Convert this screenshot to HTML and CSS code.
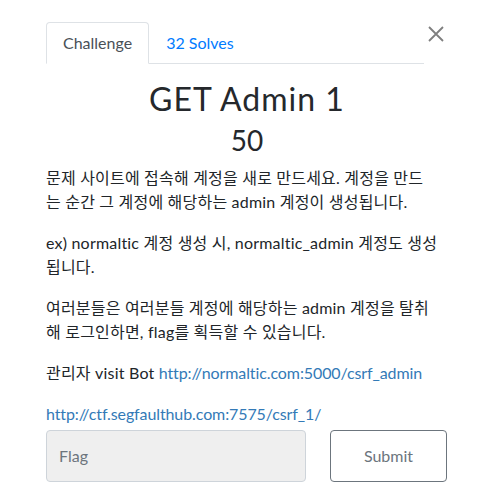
FILE: index.html
```html
<!DOCTYPE html>
<html lang="ko">
<head>
<meta charset="utf-8">
<title>GET Admin 1</title>
<link rel="stylesheet" href="styles.css">
</head>
<body>
<div class="modal">
  <div class="head">
    <ul class="tabs">
      <li class="tab active">Challenge</li>
      <li class="tab"><a href="#">32 Solves</a></li>
    </ul>
    <button class="close" aria-label="Close">
      <svg width="16" height="16" viewBox="0 0 16 16"><path d="M1 1 L15 15 M15 1 L1 15" stroke="#7f7f7f" stroke-width="1.8" fill="none"/></svg>
    </button>
  </div>
  <h2 class="name">GET Admin 1</h2>
  <h3 class="value">50</h3>
  <div class="desc">
    <p>문제 사이트에 접속해 계정을 새로 만드세요. 계정을 만드<br>는 순간 그 계정에 해당하는 admin 계정이 생성됩니다.</p>
    <p>ex) normaltic 계정 생성 시, normaltic_admin 계정도 생성<br>됩니다.</p>
    <p>여러분들은 여러분들 계정에 해당하는 admin 계정을 탈취<br>해 로그인하면, flag를 획득할 수 있습니다.</p>
    <p>관리자 visit Bot <a href="#">http://normaltic.com:5000/csrf_admin</a></p>
  </div>
  <div class="conn"><a href="#">http://ctf.segfaulthub.com:7575/csrf_1/</a></div>
  <form class="submit-row">
    <input class="flag" type="text" placeholder="Flag">
    <button class="btn" type="button">Submit</button>
  </form>
</div>
</body>
</html>
```
FILE: styles.css
```css
html, body {
  margin: 0;
  padding: 0;
  background: #fff;
}
body {
  font-family: Lato, "Noto Sans CJK KR", sans-serif;
  font-size: 16px;
  line-height: 1.5;
  color: #212529;
}
.modal {
  width: 402px;
  padding: 22px 0 0 46px;
}
.head {
  display: flex;
  align-items: flex-start;
}
.tabs {
  flex: 1;
  display: flex;
  list-style: none;
  margin: 0;
  padding: 0;
  border-bottom: 1px solid #dee2e6;
}
.tab {
  padding: 8px 16px;
  margin-bottom: -1px;
  border: 1px solid transparent;
  border-radius: 4px 4px 0 0;
  line-height: 24px;
}
.tab.active {
  color: #495057;
  border-color: #dee2e6 #dee2e6 #fff;
  background: #fff;
}
.tab a {
  color: #007bff;
  text-decoration: none;
}
.close {
  width: 24px;
  padding: 4px 0 0 4px;
  margin: 0;
  border: 0;
  background: none;
  display: flex;
  justify-content: flex-start;
}
.name {
  margin: 0 0 6px;
  padding-top: 16px;
  text-align: center;
  font-size: 32px;
  font-weight: 400;
  line-height: 1.2;
  letter-spacing: 1px;
  color: #25282c;
}
.value {
  margin: 0 0 8px;
  text-align: center;
  font-size: 28px;
  font-weight: 400;
  line-height: 1.2;
  color: #25282c;
}
.desc {
  width: 402px;
  letter-spacing: 0.2px;
}
.desc p {
  margin: 0 0 17px;
}
a {
  color: #337ab7;
  text-decoration: none;
}
.desc a,
.conn a {
  letter-spacing: -0.1px;
}
.submit-row {
  display: grid;
  grid-template-columns: 260px 117px;
  column-gap: 24px;
  margin-top: 4px;
}
.flag {
  height: 52px;
  box-sizing: border-box;
  border: 1px solid #ced4da;
  border-radius: 4px;
  background: #efefef;
  padding: 0 12px;
  font-family: Lato, sans-serif;
  font-size: 16px;
  color: #495057;
}
.flag::placeholder {
  color: #6c757d;
}
.btn {
  height: 52px;
  border: 1px solid #6c757d;
  border-radius: 4px;
  background: #fff;
  color: #6c757d;
  font-family: Lato, sans-serif;
  font-size: 16px;
}
```
